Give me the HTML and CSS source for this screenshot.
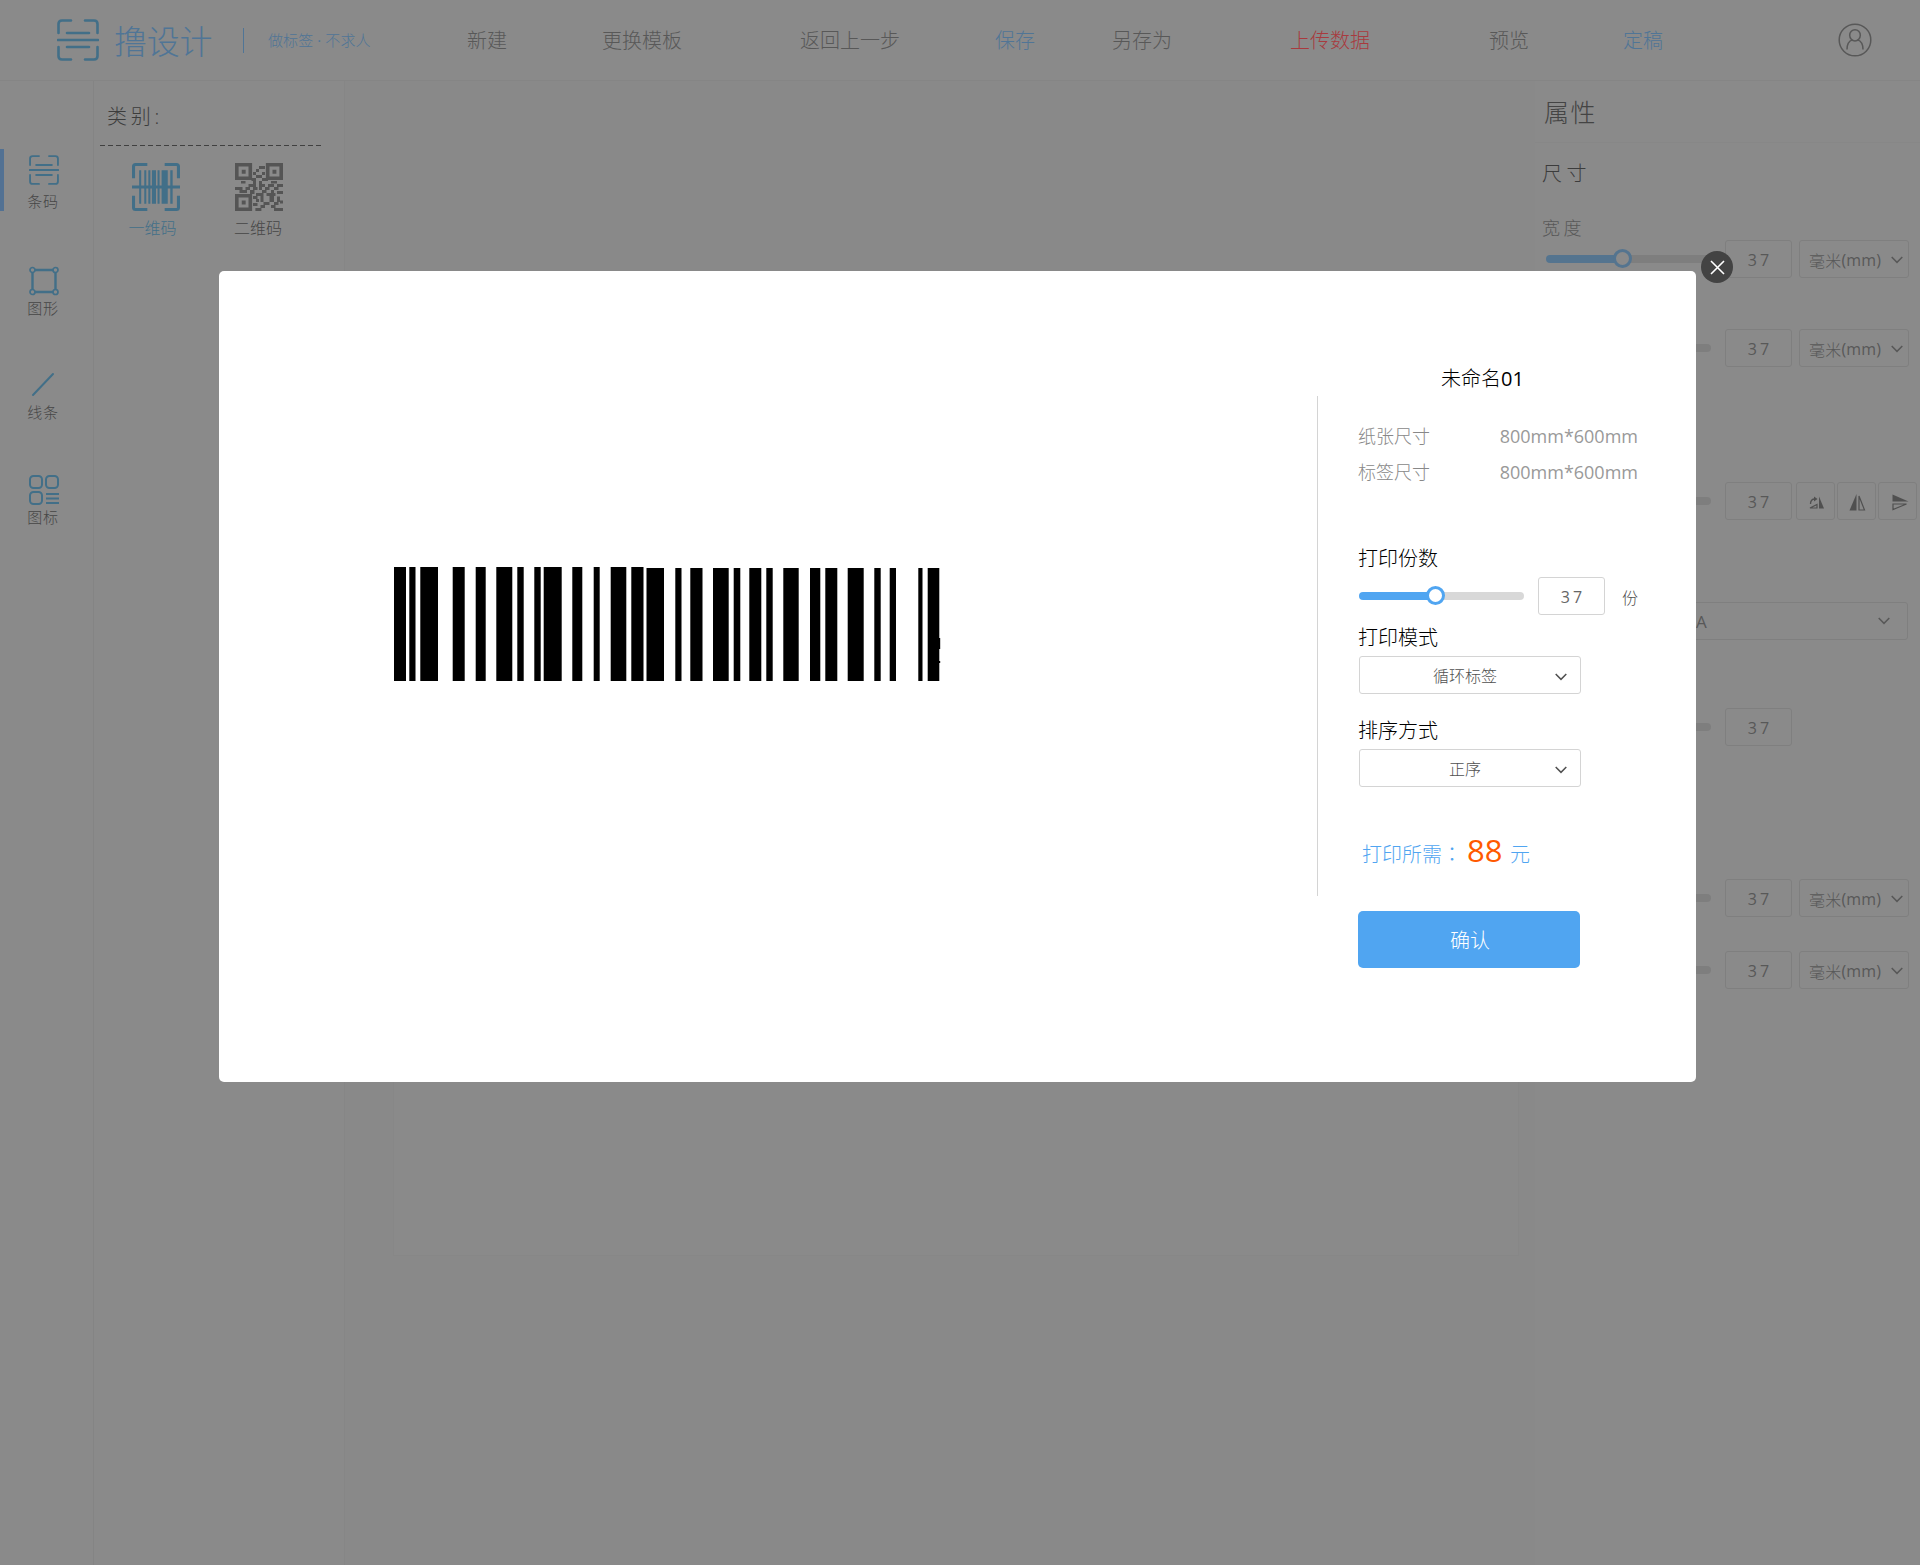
FILE: index.html
```html
<!DOCTYPE html>
<html lang="zh-CN">
<head>
<meta charset="utf-8">
<title>撸设计</title>
<link rel="stylesheet" href="styles.css">
</head>
<body>
<svg width="0" height="0" class="defs">
  <symbol id="scan" viewBox="0 0 42 42">
    <g fill="none" stroke="currentColor" stroke-width="2.6" stroke-linecap="round">
      <path d="M1.5 14V5q0-3.5 3.500-3.500H14M28 1.500h9q3.500 0 3.500 3.500V14M1.500 28v9q0 3.500 3.500 3.500H14M28 40.500h9q3.500 0 3.500-3.500V28M1 21h40M10 14h22M10 28h22"/>
    </g>
  </symbol>
  <symbol id="chev" viewBox="0 0 12 8"><path d="M.7 1L6 6.400 11.300 1" fill="none" stroke="currentColor" stroke-width="1.500"/></symbol>
</svg>
<div class="app">
  <header class="header">
    <svg class="logo-icon"><use href="#scan"/></svg>
    <span class="logo">撸设计</span>
    <i class="bar"></i>
    <span class="tagline">做标签 <b>·</b> 不求人</span>
    <nav class="nav">
      <a class="n1">新建</a><a class="n2">更换模板</a><a class="n3">返回上一步</a><a class="n4 blue">保存</a><a class="n5">另存为</a><a class="n6 red">上传数据</a><a class="n7">预览</a><a class="n8 blue">定稿</a>
    </nav>
    <svg class="avatar" viewBox="0 0 34 34" fill="none" stroke="currentColor" stroke-width="1.500"><circle cx="17" cy="17" r="15.800"/><ellipse cx="17" cy="12.300" rx="5.300" ry="5.600"/><path d="M9 26.500c0-5 2.500-8.700 5.500-9.600M25 26.500c0-5-2.500-8.700-5.500-9.600"/></svg>
  </header>
  <div class="main">
    <aside class="side">
      <div class="tool active"><svg class="i30"><use href="#scan"/></svg><span>条码</span></div>
      <div class="tool shape"><svg class="i30" viewBox="0 0 30 30" fill="none" stroke="currentColor"><path d="M6 4h18M6 26h18M3.500 6v18M26.500 6v18" stroke-width="2.400"/><g stroke-width="1.700"><circle cx="3.500" cy="4" r="2.500"/><circle cx="26.500" cy="4" r="2.500"/><circle cx="3.500" cy="26" r="2.500"/><circle cx="26.500" cy="26" r="2.500"/></g></svg><span>图形</span></div>
      <div class="tool line"><svg class="i30" viewBox="0 0 30 30"><path d="M4 26L24 5" stroke="currentColor" stroke-width="2" stroke-linecap="round"/></svg><span>线条</span></div>
      <div class="tool icons"><svg class="i30" viewBox="0 0 30 30" fill="none" stroke="currentColor" stroke-width="2"><rect x="1" y="1" width="12" height="12" rx="3.500"/><rect x="17" y="1" width="12" height="12" rx="3.500"/><rect x="1" y="17" width="12" height="12" rx="3.500"/><path d="M17 19h13M17 23.500h13M17 28h13"/></svg><span>图标</span></div>
    </aside>
    <section class="kinds">
      <h3>类别:</h3>
      <div class="dash"></div>
      <div class="kind-row">
        <div class="kind on"><svg viewBox="0 0 47 47"><path d="M1.500 15V3.500q0-2 2-2H15M32 1.500h11.500q2 0 2 2V15M1.500 32v11.500q0 2 2 2H15M32 45.500h11.500q2 0 2-2V32M0 23.500h47" fill="none" stroke="currentColor" stroke-width="3"/><path d="M7 7h2v33H7zM12 7h2v33h-2zM16 7h2v33h-2zM19.500 7h4v33h-4zM25 7h2v33h-2zM29 7h6v33h-6zM37.500 7h2.300v33h-2.300z" fill="currentColor"/></svg><span>一维码</span></div>
        <div class="kind"><svg viewBox="0 0 16 16" fill="currentColor"><path fill-rule="evenodd" d="M0 0h5.700v5.700H0zM1.200 1.200v3.300h3.300V1.200zM10.300 0H16v5.700h-5.700zM11.500 1.200v3.300h3.300V1.200zM0 10.300h5.700V16H0zM1.200 11.500v3.300h3.300v-3.300z"/><path d="M2.250 2.250h1.300v1.300h-1.300zM12.500 2.250h1.300v1.300h-1.300zM2.250 12.500h1.300v1.300h-1.300zM8 1h2v1H8zM7 2h1v1H7zM9 3h1v1H9zM6 3h1v1H6zM7 4h2v1H7zM5.500 5h1.500v1H5.500zM9 5h2v1H9zM2 6h1.500v.8H2zM6 6h1v1H6zM8 6h1v3H8zM12 6h2v.8h-2zM4.500 7H7v1H4.500zM9 7h1v1H9zM11 7h2v1h-2zM14 7h2v1h-2zM0 8h2.500v1H0zM3.500 8h1.500v1H3.500zM6 8h1.500v1H6zM10 8h1.500v1H10zM13 8h1.500v1H13zM1.500 9h2.500v1H1.500zM5 9h1.500v1.300H5zM9 9h1.500v1H9zM12 9h1v1h-1zM14 9.300h2v1h-2zM7 10h2.500v1H7zM10.500 10h3v1h-3zM6 11h1.500v1H6zM8.500 11h1v2h-1zM11.500 11h1.500v2h-1.500zM14 11.200h1v1.800h-1zM7 12h1v1H7zM9.500 13h2v1h-2zM13 13h1.500v1H13zM15 12.500h1v1h-1zM6 13.300h1.500v1H6zM8.500 14h1.500v1H8.500zM12 14h1.500v1H12zM6.800 15h2v1h-2zM13 15h3v1h-3z"/></svg><span>二维码</span></div>
      </div>
    </section>
    <section class="stage"><div class="artboard"></div></section>
    <aside class="props">
      <h2>属性</h2>
      <h3>尺寸</h3>
      <h4>宽度</h4>
      <div class="ctl r1"><div class="slider"><i></i></div><div class="num">37</div><div class="unit">毫米<b>(mm)</b><svg><use href="#chev"/></svg></div></div>
      <div class="ctl r2"><div class="slider"><i></i></div><div class="num">37</div><div class="unit">毫米<b>(mm)</b><svg><use href="#chev"/></svg></div></div>
      <div class="ctl r3"><div class="slider"><i></i></div><div class="num">37</div>
        <div class="flips">
          <div><svg viewBox="0 0 17 14" fill="currentColor"><path d="M11 1v12h5z"/><path d="M2 12.500h7V9z" fill="none" stroke="currentColor" stroke-width="1.200"/><path d="M2.500 8.500Q2.500 3.500 7 3.500" fill="none" stroke="currentColor" stroke-width="1.300"/><path d="M6 1l3.500 2.500L6 6z"/></svg></div>
          <div><svg viewBox="0 0 17 17" fill="currentColor"><path d="M7.500 0v16.500H.5z"/><path d="M10 2v14h5.500z" fill="none" stroke="currentColor" stroke-width="1.200"/></svg></div>
          <div><svg viewBox="0 0 17 17" fill="currentColor"><path d="M.5.500v7h16z"/><path d="M1 10v5.500l13.500-5.500z" fill="none" stroke="currentColor" stroke-width="1.200"/></svg></div>
        </div>
      </div>
      <div class="ctl r4"><div class="wide">A<svg><use href="#chev"/></svg></div></div>
      <div class="ctl r5"><div class="slider"><i></i></div><div class="num">37</div></div>
      <div class="ctl r6"><div class="slider"><i></i></div><div class="num">37</div><div class="unit">毫米<b>(mm)</b><svg><use href="#chev"/></svg></div></div>
      <div class="ctl r7"><div class="slider"><i></i></div><div class="num">37</div><div class="unit">毫米<b>(mm)</b><svg><use href="#chev"/></svg></div></div>
    </aside>
  </div>
  <div class="modal">
    <button class="close" aria-label="关闭"><svg viewBox="0 0 32 32"><circle cx="16" cy="16" r="16" fill="#434343"/><path d="M10 10l13 13M23 10L10 23" stroke="#fff" stroke-width="1.600"/></svg></button>
    <div class="preview">
      <svg viewBox="394 567 547 114" class="barcode"><path d="M394 567h12v114h-12zM409.300 567h6.200v114h-6.200zM420.300 567H438v114h-17.700zM452.700 567h12v114h-12zM475.700 567h10v114h-10zM496.300 567h16v114h-16zM517.300 567h6.400v114h-6.400zM534.300 567h6.400v114h-6.400zM543.700 567h18v114h-18zM572.300 567h10v114h-10zM593.700 567h6v114h-6zM610.700 567h15.600v114h-15.600zM631.300 567h12.200v114h-12.200zM646.500 568H664v113h-17.500zM675.300 568h6.200v113h-6.200zM690.300 568h12.200v113h-12.200zM713 568h15.700v113H713zM733.700 568h6.600v113h-6.600zM749.300 568h12v113h-12zM766.300 568h6.400v113h-6.400zM783.300 568h15.400v113h-15.400zM810 568h10.300v113H810zM825.300 568h12v113h-12zM847.700 568h16v113h-16zM874.300 568h6.400v113h-6.400zM889.700 568h6.300v113h-6.300zM918.300 568h4.200v113h-4.200zM927.700 568h11.600v113h-11.600zM939 638h1.200v11H939zM939 661h1.200v2H939z"/></svg>
    </div>
    <div class="rule"></div>
    <div class="form">
      <h2>未命名<b>01</b></h2>
      <dl><dt>纸张尺寸</dt><dd>800mm*600mm</dd><dt>标签尺寸</dt><dd>800mm*600mm</dd></dl>
      <h3 class="copies">打印份数</h3>
      <div class="ctl"><div class="slider"><i></i></div><div class="num">37</div><span class="fen">份</span></div>
      <h3 class="mode">打印模式</h3>
      <div class="select">循环标签<svg><use href="#chev"/></svg></div>
      <h3 class="order">排序方式</h3>
      <div class="select">正序<svg><use href="#chev"/></svg></div>
      <div class="price">打印所需<span class="colon" lang="zh-TW">：</span><b>88</b>元</div>
      <button class="ok">确认</button>
    </div>
  </div>
</div>
</body>
</html>
```
FILE: styles.css
```css
* { box-sizing: border-box; margin: 0; padding: 0; }
body { font-family: "Open Sans", "Noto Sans CJK SC", sans-serif; font-weight: 300; background: #8a8a8a; color: #585858; }
h2, h3, h4 { font-weight: inherit; }
b { font-weight: 400; }
button { border: 0; background: none; font: inherit; }
svg { display: block; flex: none; }
.defs { position: absolute; }
.app { position: relative; width: 1920px; height: 1565px; overflow: hidden; display: flex; flex-direction: column; --line: #7f7f7f; --track: #7e7e7e; --blue: #54748f; --hole: #8a8a8a; }

.header { height: 81px; flex: none; display: flex; align-items: center; padding-left: 57px; border-bottom: 1px solid #858585; white-space: nowrap; }
.logo-icon { width: 42px; height: 42px; color: #426f88; }
.logo { width: 113px; margin: 3px 0 0 15px; font-size: 33px; line-height: 40px; letter-spacing: -.3px; color: #507596; }
.bar { width: 1px; height: 25px; margin-left: 16px; background: #507596; }
.tagline { width: 104px; margin-left: 24px; margin-top: -1px; font-size: 15px; letter-spacing: .1px; color: #507596; }
.nav { display: flex; flex: none; width: 1270px; margin-top: 2px; font-size: 20px; line-height: 30px; }
.nav a { flex: none; }
.n1 { margin-left: 95px; }
.n2 { margin-left: 95px; }
.n3 { margin-left: 118px; }
.n4 { margin-left: 95px; }
.n5 { margin-left: 77px; }
.n6 { margin-left: 118px; }
.n7 { margin-left: 119px; }
.n8 { margin-left: 94px; }
.blue { color: #507596; }
.red { color: #a83a3e; }
.avatar { width: 34px; height: 34px; margin-left: 196px; }

.main { flex: 1; display: flex; }
.side { width: 94px; border-right: 1px solid #848484; padding-top: 68px; }
.tool { display: flex; flex-direction: column; align-items: center; height: 62px; padding-right: 8px; font-size: 15px; line-height: 20px; letter-spacing: .7px; color: #464646; }
.tool.active { border-left: 4px solid #527193; padding: 6px 12px 0 0; }
.tool svg { color: #426f88; margin-left: 3px; }
.tool span { margin: 6px 0 0 1px; }
.i30 { width: 30px; height: 30px; }
.tool.shape { margin-top: 55px; }
.tool.line { margin-top: 41px; }
.tool.icons { margin-top: 44px; }
.tool.shape svg, .tool.icons svg { margin-left: 2px; }
.tool.shape span { margin-top: 2px; }
.tool.line span { margin-top: 3px; }
.tool.icons span { margin-top: 2px; }

.kinds { width: 251px; border-right: 1px solid #868686; padding-left: 6px; }
.kinds h3 { margin: 21px 0 0 7px; font-size: 20px; line-height: 30px; letter-spacing: 3.8px; color: #3c3c3c; }
.dash { width: 222px; height: 1px; margin-top: 13px; background: repeating-linear-gradient(90deg, #404040 0 5px, transparent 5px 8px); }
.kind-row { display: flex; gap: 56px; padding: 17px 0 0 30px; }
.kind { width: 48px; display: flex; flex-direction: column; align-items: center; font-size: 16px; line-height: 24px; white-space: nowrap; color: #464646; }
.kind svg { width: 48px; height: 48px; margin-left: 1px; color: #555; }
.kind span { margin-top: 5px; }
.kind.on, .kind.on svg { color: #426f88; }
.kind.on svg { margin-left: 3px; }
.kind.on span { margin-left: -3px; }

.stage { width: 1190px; padding: 300px 0 0 48px; background: #898989; }
.artboard { width: 1126px; height: 875px; background: #8a8a8a; border: 1px solid #878787; border-top: 0; }

.props { width: 385px; }
.props h2 { height: 62px; padding: 13px 0 0 9px; font-size: 25px; line-height: 36px; letter-spacing: 1.500px; border-bottom: 1px solid #878787; color: #444; }
.props h3 { margin: 16px 0 0 7px; font-size: 20px; line-height: 30px; letter-spacing: 4.500px; color: #3c3c3c; }
.props h4 { margin: 26px 0 0 7px; font-size: 18px; line-height: 26px; letter-spacing: 3.500px; }
.ctl { display: flex; align-items: center; height: 38px; padding-left: 11px; }
.slider { flex: none; width: 165px; height: 8px; border-radius: 4px; background: linear-gradient(90deg, var(--blue) 46%, var(--track) 46%); }
.slider i { display: block; width: 19px; height: 19px; margin: -6px 0 0 67px; border: 3px solid var(--blue); border-radius: 50%; background: var(--hole); }
.num { flex: none; width: 67px; height: 38px; margin-left: 14px; border: 1px solid var(--line); border-radius: 3px; font-size: 16px; line-height: 38px; letter-spacing: 3px; text-indent: 3px; text-align: center; font-weight: 400; }
.unit { display: flex; align-items: center; width: 110px; height: 38px; margin-left: 7px; padding: 1px 0 0 9px; border: 1px solid var(--line); border-radius: 3px; font-size: 16px; letter-spacing: .2px; white-space: nowrap; }
.unit svg, .select svg, .wide svg { width: 12px; height: 8px; }
.unit svg { margin-left: auto; margin-right: 5px; margin-top: 1px; }
.r1 { margin-top: -1px; }
.r2 { margin-top: 51px; }
.r3 { margin-top: 115px; }
.r4 { margin-top: 82px; }
.r5 { margin-top: 68px; }
.r6 { margin-top: 133px; }
.r7 { margin-top: 34px; }
.flips { display: flex; gap: 2px; margin-left: 4px; }
.flips div { width: 39px; height: 38px; display: flex; align-items: center; justify-content: center; border: 1px solid var(--line); border-radius: 3px; }
.flips svg { width: 17px; height: 17px; margin: 2px 0 0 2px; color: #505050; }
.flips div:last-child svg { margin-left: 5px; }
.wide { width: 362px; height: 38px; display: flex; align-items: center; justify-content: space-between; padding: 0 17px 0 149px; border: 1px solid var(--line); border-radius: 3px; font-size: 17px; font-weight: 400; }

.modal { position: absolute; left: 219px; top: 271px; width: 1477px; height: 811px; display: flex; border-radius: 5px; background: #fff; color: #666; --line: #d4d4d4; --track: #d8d8d8; --blue: #50a5f1; --hole: #fff; }
.modal .select, .fen { color: #505050; }
.close { position: absolute; left: 1482px; top: -20px; width: 32px; height: 32px; }
.preview { width: 1098px; padding: 296px 0 0 175px; }
.barcode { width: 547px; height: 114px; }
.rule { width: 1px; height: 500px; margin-top: 125px; background: #d4d4d4; }
.form { width: 300px; padding-left: 40px; }
.form h2 { width: 167px; margin: 93px 0 0 83px; font-size: 20px; line-height: 30px; color: #000; }
.form dl { display: grid; grid-template-columns: 1fr auto; width: 280px; margin-top: 24px; font-size: 18px; line-height: 36px; color: #888; }
.form dd { font-weight: 400; color: #999; }
.form h3 { font-size: 20px; line-height: 32px; color: #000; }
.form .copies { margin-top: 53px; }
.form .ctl { padding-left: 1px; margin-top: 2px; }
.fen { margin: 2px 0 0 17px; font-size: 16px; }
.form .mode { margin-top: 7px; }
.form .mode + .select { margin-top: 2px; }
.form .order { margin-top: 21px; }
.select { position: relative; width: 222px; height: 38px; margin: 2px 0 0 1px; padding-right: 10px; border: 1px solid var(--line); border-radius: 3px; font-size: 16px; line-height: 38px; text-align: center; }
.select svg { position: absolute; right: 13px; top: 16px; }
.price { display: flex; align-items: baseline; height: 44px; margin: 41px 0 0 4px; font-size: 20px; line-height: 44px; color: #50a5f1; }
.colon { font-family: "Noto Sans CJK TC", sans-serif; }
.price b { width: 43px; margin-left: 5px; font-size: 31px; color: #ff5a00; }
.ok { width: 222px; height: 57px; margin-top: 39px; padding: 0 0 1px 2px; border-radius: 5px; background: #50a5f1; color: #fff; font-size: 20px; }
```
